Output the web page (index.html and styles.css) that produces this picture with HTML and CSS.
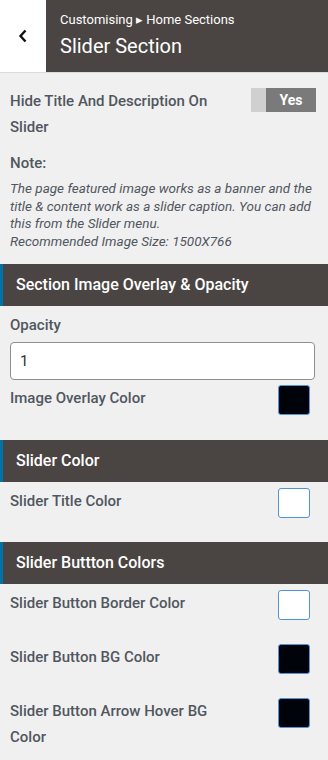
FILE: index.html
```html
<!DOCTYPE html>
<html>
<head>
<meta charset="utf-8">
<link rel="stylesheet" href="styles.css">
</head>
<body>
<div class="panel">
  <header class="top">
    <div class="back">
      <svg width="10" height="14" viewBox="0 0 10 14"><path d="M7.5 1.5 L2.5 7 L7.5 12.5" fill="none" stroke="#111" stroke-width="2.4"/></svg>
    </div>
    <div class="titles">
      <div class="crumb">Customising ▸ Home Sections</div>
      <div class="title">Slider Section</div>
    </div>
  </header>

  <div class="group first">
    <div class="row">
      <div class="label">Hide Title And Description On Slider</div>
      <div class="toggle"><span class="off"></span><span class="on">Yes</span></div>
    </div>
    <div class="note-title">Note:</div>
    <p class="note">The page featured image works as a banner and the title &amp; content work as a slider caption. You can add this from the Slider menu.<br>Recommended Image Size: 1500X766</p>
  </div>

  <div class="section-head">Section Image Overlay &amp; Opacity</div>
  <div class="group">
    <div class="field-label">Opacity</div>
    <div class="input">1</div>
    <div class="row color-row tight">
      <div class="label">Image Overlay Color</div>
      <span class="swatch black"></span>
    </div>
  </div>

  <div class="section-head">Slider Color</div>
  <div class="group">
    <div class="row color-row">
      <div class="label">Slider Title Color</div>
      <span class="swatch white"></span>
    </div>
  </div>

  <div class="section-head">Slider Buttton Colors</div>
  <div class="group">
    <div class="row color-row">
      <div class="label">Slider Button Border Color</div>
      <span class="swatch white"></span>
    </div>
    <div class="row color-row">
      <div class="label">Slider Button BG Color</div>
      <span class="swatch black"></span>
    </div>
    <div class="row color-row">
      <div class="label narrow">Slider Button Arrow Hover BG Color</div>
      <span class="swatch black"></span>
    </div>
  </div>
</div>
</body>
</html>
```

FILE: styles.css
```css
* { box-sizing: border-box; }
html, body { margin: 0; padding: 0; }
body {
  background: #f0f0f1;
  font-family: Roboto, "Liberation Sans", Arial, sans-serif;
  color: #50575e;
  width: 328px;
}
.top {
  display: flex;
  height: 73px;
  border-bottom: 1px solid #dcdcde;
}
.back {
  width: 46px;
  background: #fff;
  display: flex;
  align-items: center;
  justify-content: center;
}
.titles {
  flex: 1;
  background: #4a4543;
  color: #fff;
  padding: 12px 0 0 14px;
}
.crumb {
  font-size: 13px;
  line-height: 16px;
}
.title {
  font-size: 20px;
  line-height: 24px;
  margin-top: 6px;
}
.group {
  padding: 0 12px 6px 10px;
}
.group.first {
  padding-top: 15px;
  padding-bottom: 13px;
  padding-right: 10px;
}
.row {
  display: flex;
  justify-content: space-between;
  align-items: flex-start;
}
.label {
  font-size: 15px;
  font-weight: 500;
  line-height: 26px;
  max-width: 225px;
}
.label.narrow { max-width: 220px; }
.toggle {
  display: flex;
  height: 24px;
  width: 65px;
  flex: none;
  margin-right: 2px;
}
.toggle .off {
  width: 15px;
  background: #d0d0d0;
}
.toggle .on {
  flex: 1;
  background: #7a7a7a;
  color: #fff;
  font-size: 14px;
  font-weight: 700;
  line-height: 24px;
  text-align: center;
}
.note-title {
  font-size: 15px;
  font-weight: 500;
  line-height: 20px;
  margin-top: 13px;
}
.note {
  margin: 7px 0 0;
  font-size: 13.5px;
  font-style: italic;
  line-height: 17.7px;
  color: #50575e;
}
.section-head {
  height: 42px;
  background: #4a4543;
  border-left: 3px solid #0073aa;
  color: #fff;
  font-size: 16px;
  font-weight: 500;
  line-height: 42px;
  padding-left: 13px;
}
.field-label {
  font-size: 15px;
  font-weight: 500;
  line-height: 20px;
  margin-top: 9px;
}
.input {
  margin-top: 7px;
  margin-right: 1px;
  height: 38px;
  background: #fff;
  border: 1px solid #8c8f94;
  border-radius: 4px;
  padding: 0 9px;
  font-size: 15px;
  line-height: 36px;
  color: #2c3338;
}
.color-row {
  padding-top: 6px;
  padding-right: 6px;
  padding-bottom: 18px;
}
.color-row.tight {
  padding-top: 5px;
  padding-bottom: 19px;
}
.swatch {
  width: 32px;
  height: 30px;
  flex: none;
  border: 1px solid #4f94d4;
  border-radius: 3px;
}
.swatch.black { background: #00030a; }
.swatch.white { background: #fff; }
```
